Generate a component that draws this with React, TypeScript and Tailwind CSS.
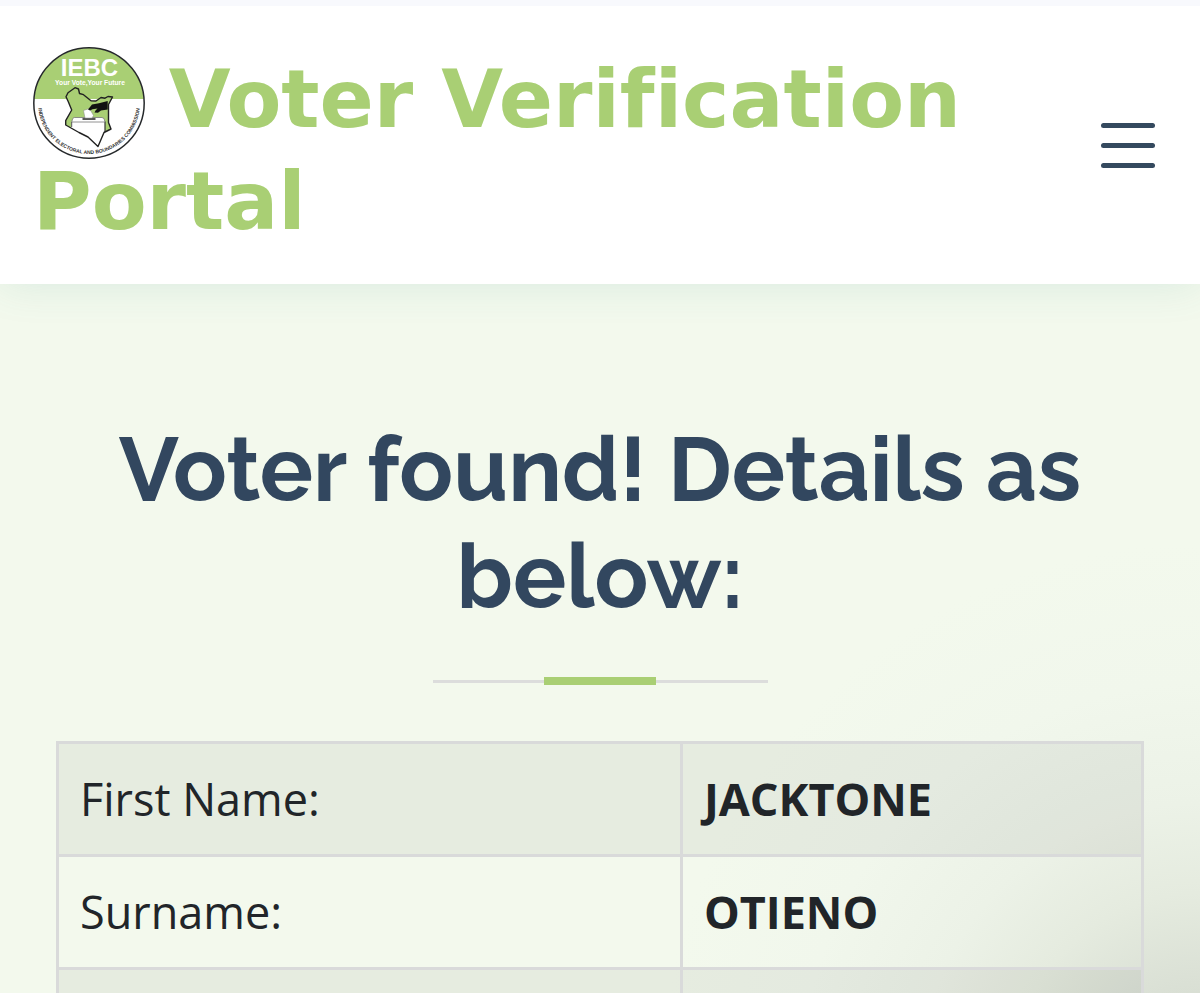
import React from "react";

const details = [
  { label: "First Name:", value: "JACKTONE" },
  { label: "Surname:", value: "OTIENO" },
  { label: "", value: "" },
];

const country =
  "M35 45.700 42 40.700l3.500 1.300 1 4.500 4 1.200 7.500 6 5 .3 5-3.500 4 .7 3-1.700 4.500.5-4 7.500v18l2.500 6.500-7 3.500-6 14-10-9.500-9-4.500L32.700 78v-4.300L38.700 63l-3.400-8.300-2.300-5z";

function Logo() {
  return (
    <svg viewBox="0 0 112 112" className="-mt-3.5 -mr-1 -mb-2.5 inline-block size-28 align-middle" role="img" aria-label="IEBC">
      <defs>
        <clipPath id="disc">
          <circle cx="56" cy="56" r="55" />
        </clipPath>
        <clipPath id="country">
          <path d={country} />
        </clipPath>
        <path id="rim" d="M5 56A51 51 0 0 0 107 56" />
      </defs>
      <circle cx="56" cy="56" r="55" fill="#fff" />
      <rect width="112" height="52" fill="#a9cf74" clipPath="url(#disc)" />
      <circle cx="56" cy="56" r="55.200" fill="none" stroke="#25282a" strokeWidth="1.500" />
      <text x="56.500" y="29" textAnchor="middle" fill="#fff" fontFamily="Liberation Sans" fontWeight="700" fontSize="24">IEBC</text>
      <text x="57" y="38" textAnchor="middle" fill="#fff" fontFamily="Liberation Sans" fontWeight="700" fontSize="6.700">Your Vote,Your Future</text>
      <g clipPath="url(#country)">
        <rect width="112" height="112" fill="#a9cf74" />
        <path d="M38.700 74.500H72v13l-2 26H35z" fill="#fff" />
        <path d="M72 74.500v14" stroke="#333" strokeWidth="1.200" />
      </g>
      <path d={country} fill="none" stroke="#222" strokeWidth="1.400" strokeLinejoin="round" />
      <path d="m38.700 75 1-3.500 1.500-1H69l2 1 1 3.500z" fill="#fff" stroke="#777" strokeWidth=".8" />
      <path d="M38.700 75v5" stroke="#555" strokeWidth="1" />
      <path d="M49.500 72h13" stroke="#444" strokeWidth="1.800" />
      <path d="m50.500 63.500 6-2 4 7-1.500 2.500h-7z" fill="#fff" stroke="#888" strokeWidth=".5" />
      <path d="m55 62.500 4-5 7-1.200 8.700-2.300v8.500l-6.700 1-3 2.300-3.500-.3 1-2 2-2-5 .7-2.500 1.300z" fill="#111" />
      <text fill="#333" fontFamily="Liberation Sans" fontWeight="700" fontSize="5">
        <textPath href="#rim" startOffset="50%" textAnchor="middle">INDEPENDENT ELECTORAL AND BOUNDARIES COMMISSION</textPath>
      </text>
    </svg>
  );
}

export default function App() {
  return (
    <div className="min-h-screen overflow-hidden border-t-[6px] border-[#f8f9fd] bg-[#f3f9ed] bg-[radial-gradient(circle_at_100%_100%,#cfd6cb_0px,#dae0d5_100px,#e5ebdf_190px,#ecf2e7_280px,#f1f7ec_400px,#f3f9ed_540px)] font-['Open_Sans',sans-serif] text-[#212529]">
      <header className="flex items-center justify-between bg-white py-[31px] pr-[45px] pl-[33px] shadow-[0_0_40px_rgba(60,140,140,0.14)]">
        <a href="#" className="flex-1 pt-3 font-['DejaVu_Sans',sans-serif] text-[80px] leading-[102px] font-bold text-[#a9cf74] [font-variant-ligatures:none]">
          <Logo /> Voter Verification Portal
        </a>
        <button type="button" aria-label="Menu" className="flex w-[54px] flex-col gap-[15px]">
          <span className="h-[5px] w-full rounded-full bg-[#34495e]" />
          <span className="h-[5px] w-full rounded-full bg-[#34495e]" />
          <span className="h-[5px] w-full rounded-full bg-[#34495e]" />
        </button>
      </header>
      <main className="px-14 pt-[132px]">
        <h1 className="text-center font-[Raleway,Lato,sans-serif] text-[89px] leading-[107px] font-bold text-[#32475f]">
          Voter found! Details as below:
        </h1>
        <div className="mx-auto mt-[47px] flex w-[335px] items-center">
          <span className="h-[3px] flex-1 bg-[#dcdddc]" />
          <span className="h-2 w-28 bg-[#a9cf74]" />
          <span className="h-[3px] flex-1 bg-[#dcdddc]" />
        </div>
        <table className="mt-14 w-full table-fixed border-collapse text-left text-[45px] leading-[66px]">
          <colgroup>
            <col className="w-[57.500%]" />
            <col />
          </colgroup>
          <tbody>
            {details.map((row, i) => (
              <tr key={i} className="h-[113px] odd:bg-black/5">
                <th scope="row" className="border-[3px] border-[#d9dada] px-[21px] py-[22px] font-normal">{row.label}</th>
                <td className="border-[3px] border-[#d9dada] px-[21px] py-[22px] font-bold">{row.value}</td>
              </tr>
            ))}
          </tbody>
        </table>
      </main>
    </div>
  );
}
